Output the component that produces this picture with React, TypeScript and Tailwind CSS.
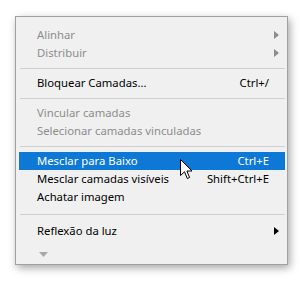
import React from 'react';

type Item =
  | { kind: 'sep'; tall?: boolean }
  | { kind: 'row'; label: string; shortcut?: string; sub?: boolean; disabled?: boolean; active?: boolean };

const items: Item[] = [
  { kind: 'row', label: 'Alinhar', sub: true, disabled: true },
  { kind: 'row', label: 'Distribuir', sub: true, disabled: true },
  { kind: 'sep' },
  { kind: 'row', label: 'Bloquear Camadas...', shortcut: 'Ctrl+/' },
  { kind: 'sep' },
  { kind: 'row', label: 'Vincular camadas', disabled: true },
  { kind: 'row', label: 'Selecionar camadas vinculadas', disabled: true },
  { kind: 'sep' },
  { kind: 'row', label: 'Mesclar para Baixo', shortcut: 'Ctrl+E', active: true },
  { kind: 'row', label: 'Mesclar camadas visíveis', shortcut: 'Shift+Ctrl+E' },
  { kind: 'row', label: 'Achatar imagem' },
  { kind: 'sep', tall: true },
  { kind: 'row', label: 'Reflexão da luz', sub: true },
];

function Arrow({ color }: { color: string }) {
  return (
    <svg width="5" height="8" viewBox="0 0 5 8">
      <path d="M0 0 L5 4 L0 8 Z" fill={color} />
    </svg>
  );
}

// mouse pointer over the highlighted row
function Cursor() {
  return (
    <svg width="13" height="21" viewBox="0 0 13 21" className="absolute left-[161px] top-[7px]">
      <path
        d="M0.5 0.5 L0.5 16.5 L4.5 12.8 L7.3 19.5 L9.6 18.5 L6.9 12 L12 12 Z"
        fill="#fff"
        stroke="#000"
        strokeWidth="1"
        strokeLinejoin="round"
      />
    </svg>
  );
}

export default function App() {
  return (
    <div className="w-[305px] h-[281px] bg-white pt-[16px] pl-[15px]" style={{ fontFamily: '"Noto Sans", sans-serif' }}>
      <div className="w-[273px] h-[249px] bg-[#f0f0f0] border border-[#a0a0a0] shadow-[2px_3px_8px_rgba(0,0,0,0.35)] pl-[3px] pr-[2px] pt-[9px] flex flex-col">
        {items.map((it, i) =>
          it.kind === 'sep' ? (
            <div key={i} className={`${it.tall ? 'h-[16px]' : 'h-[12px]'} flex items-center pl-[1px]`}>
              <div className="w-full h-px bg-[#cfcfcf]" />
            </div>
          ) : (
            <div
              key={i}
              className={`relative h-[18px] flex items-center pl-[18px] pr-[16px] text-[11.3px] ${
                it.active ? 'bg-[#0e78d6] text-white' : it.disabled ? 'text-[#8d8d8d]' : 'text-black'
              }`}
            >
              <span className="flex-1">{it.label}</span>
              {it.shortcut && <span>{it.shortcut}</span>}
              {it.sub && (
                <span className="absolute right-[6px] top-[5px]">
                  <Arrow color={it.disabled ? '#8d8d8d' : '#000'} />
                </span>
              )}
              {it.active && <Cursor />}
            </div>
          )
        )}
        <div className="h-[22px] flex items-center pl-[20px] pt-[6px]">
          <svg width="9" height="5" viewBox="0 0 9 5">
            <path d="M0 0 L9 0 L4.5 5 Z" fill="#a8a8a8" />
          </svg>
        </div>
      </div>
    </div>
  );
}
